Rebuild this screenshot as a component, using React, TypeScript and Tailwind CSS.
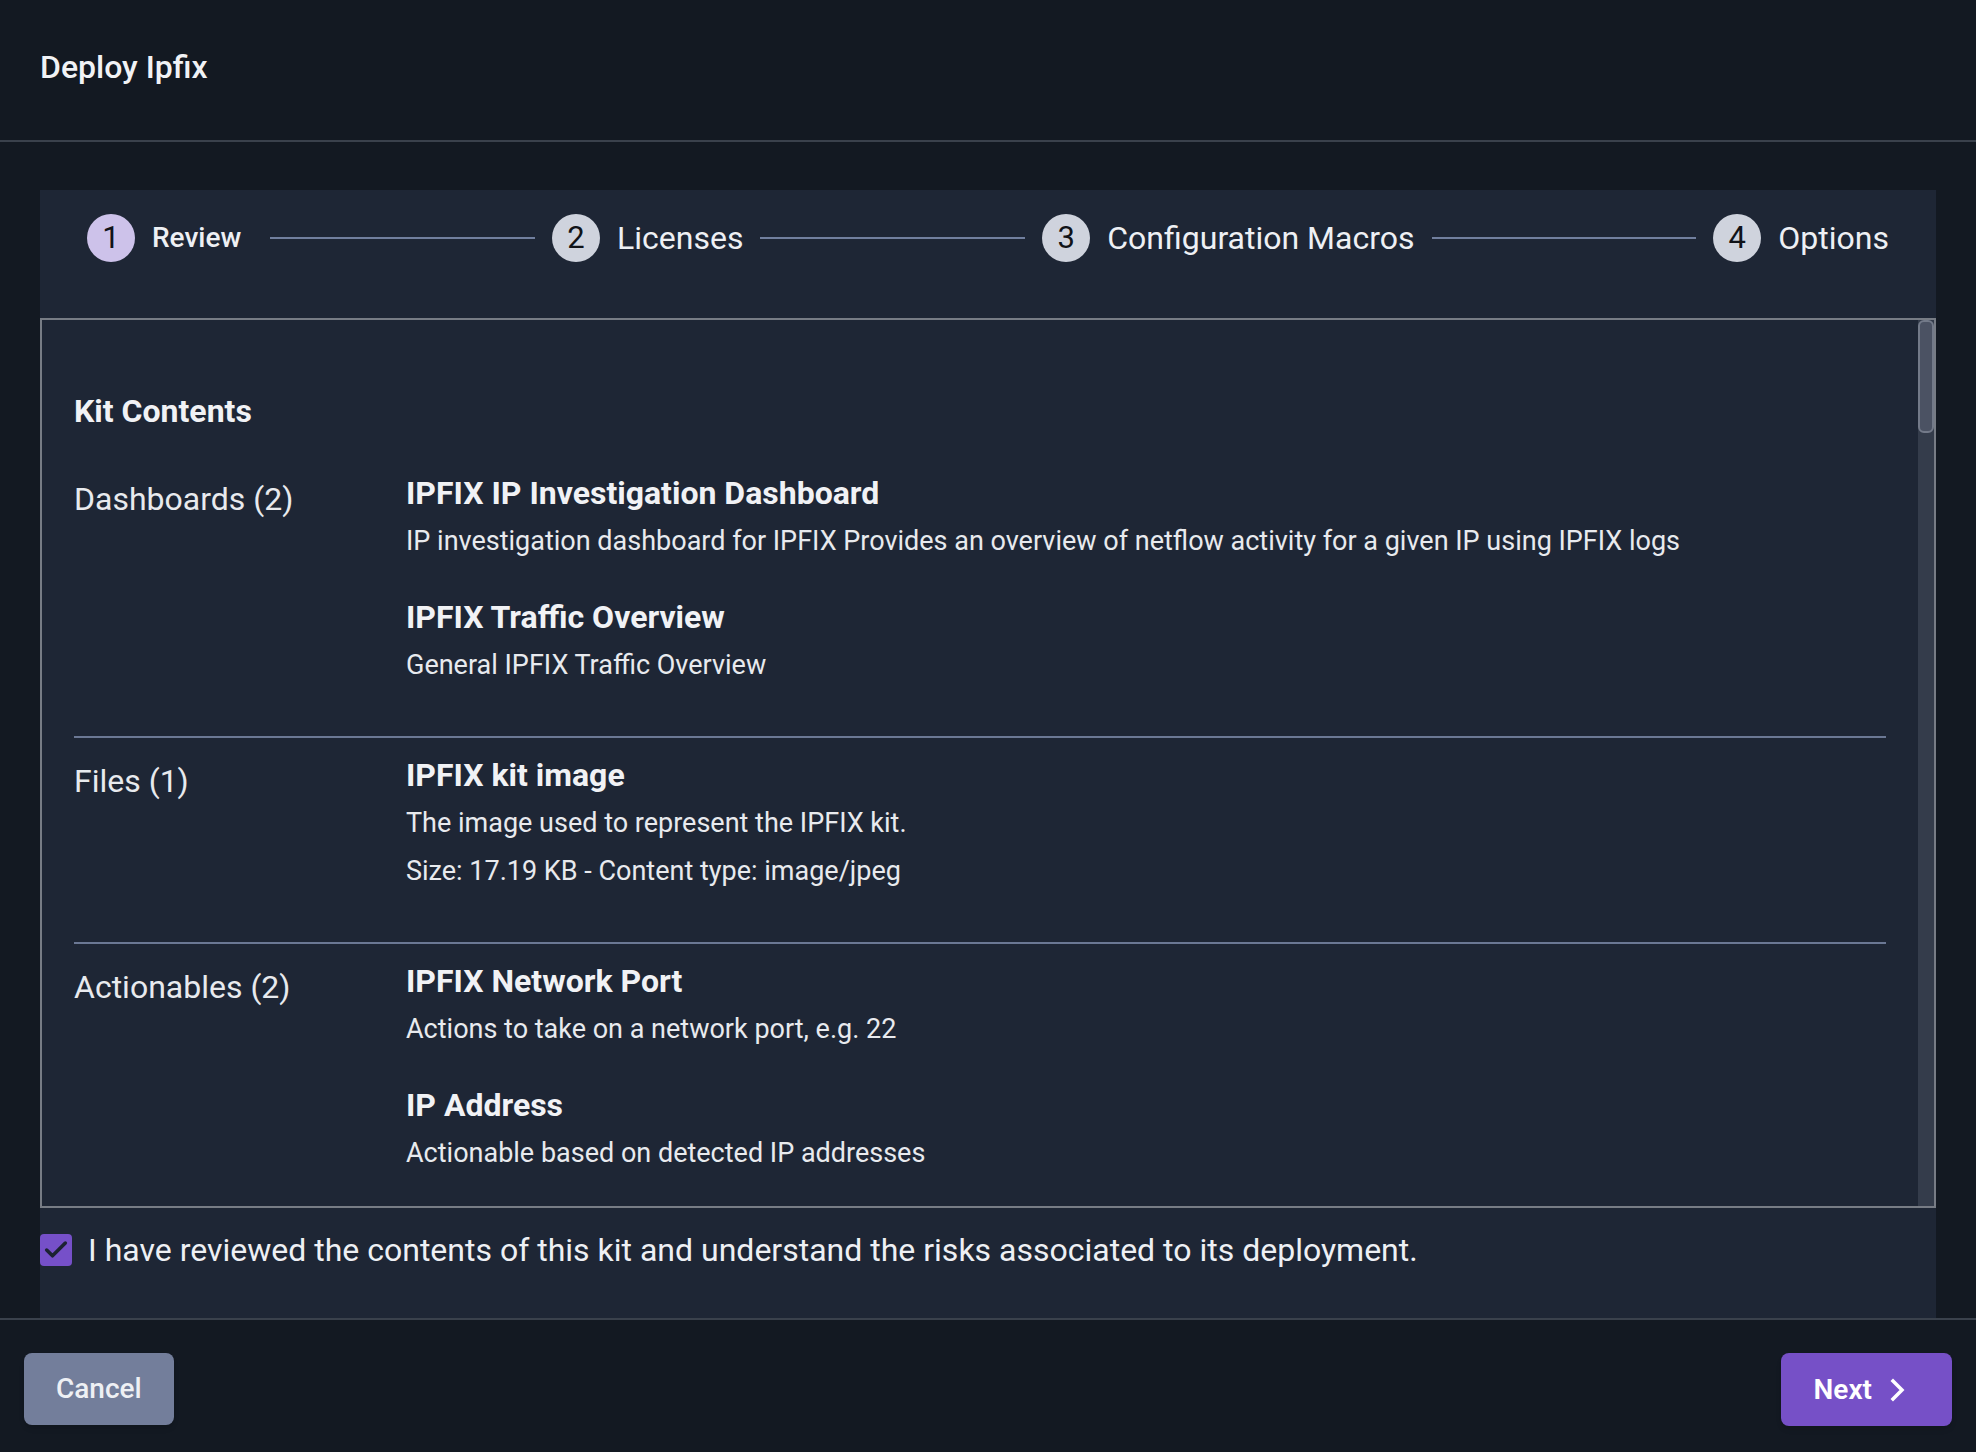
import { Check } from "lucide-react"

// Kit contents shown on the review step
const sections = [
  {
    label: "Dashboards (2)",
    items: [
      {
        title: "IPFIX IP Investigation Dashboard",
        lines: ["IP investigation dashboard for IPFIX Provides an overview of netflow activity for a given IP using IPFIX logs"],
      },
      { title: "IPFIX Traffic Overview", lines: ["General IPFIX Traffic Overview"] },
    ],
  },
  {
    label: "Files (1)",
    items: [
      {
        title: "IPFIX kit image",
        lines: ["The image used to represent the IPFIX kit.", "Size: 17.19 KB - Content type: image/jpeg"],
      },
    ],
  },
  {
    label: "Actionables (2)",
    items: [
      { title: "IPFIX Network Port", lines: ["Actions to take on a network port, e.g. 22"] },
      { title: "IP Address", lines: ["Actionable based on detected IP addresses"] },
    ],
  },
]

const steps = ["Review", "Licenses", "Configuration Macros", "Options"]

function Stepper() {
  return (
    <div className="flex items-center gap-[17px] px-[47px] pt-[24px] pb-[56px]">
      {steps.map((step, i) => (
        <div key={step} className="contents">
          {i > 0 && <div className="h-[2px] flex-1 bg-[#717f9e]" />}
          <div className="flex items-center gap-[17px]">
            <div
              className={
                i === 0
                  ? "flex h-[48px] w-[48px] items-center justify-center rounded-full bg-[#cdc2ea] text-[31px] text-[#111318]"
                  : "flex h-[48px] w-[48px] items-center justify-center rounded-full bg-[#cfd3dd] text-[31px] text-[#111318]"
              }
            >
              {i + 1}
            </div>
            {i === 0 ? (
              <span className="pr-[12px] text-[28px] font-medium text-[#eef0f4]">{step}</span>
            ) : (
              <span className="text-[32px] text-[#eef0f4]">{step}</span>
            )}
          </div>
        </div>
      ))}
    </div>
  )
}

export default function App() {
  return (
    <div className="flex h-[1452px] w-[1976px] flex-col overflow-hidden bg-[#131922] font-['Roboto',sans-serif] text-[#eef0f4]">
      {/* Header */}
      <div className="h-[142px] shrink-0 border-b-2 border-[#3a414c] px-[40px] pt-[47px]">
        <h1 className="text-[32px] font-medium leading-[40px] text-[#f1f2f5]">Deploy Ipfix</h1>
      </div>

      {/* Body */}
      <div className="flex-1 overflow-hidden px-[40px] pt-[48px]">
        <div className="h-full bg-[#1e2635]">
          <Stepper />

          <div className="flex h-[890px] border-2 border-[#777c85]">
            <div className="flex-1 overflow-hidden px-[32px] pt-[71px]">
              <h2 className="text-[32px] font-bold leading-[40px] text-[#f1f2f5]">Kit Contents</h2>
              {sections.map((section, si) => (
                <div
                  key={section.label}
                  className={
                    si === 0
                      ? "grid grid-cols-[332px_1fr] border-b-2 border-[#6b7894] pt-[42px] pb-[47px]"
                      : si === sections.length - 1
                        ? "grid grid-cols-[332px_1fr] pt-[17px]"
                        : "grid grid-cols-[332px_1fr] border-b-2 border-[#6b7894] pt-[17px] pb-[47px]"
                  }
                >
                  <div className="pt-[6px] text-[32px] leading-[40px] text-[#e8eaee]">{section.label}</div>
                  <div className="flex flex-col gap-[32px]">
                    {section.items.map((item) => (
                      <div key={item.title}>
                        <div className="text-[32px] font-bold leading-[40px] text-[#f1f2f5]">{item.title}</div>
                        <div className="mt-[4px]">
                          {item.lines.map((line) => (
                            <div key={line} className="text-[27px] leading-[48px] text-[#e8eaee]">
                              {line}
                            </div>
                          ))}
                        </div>
                      </div>
                    ))}
                  </div>
                </div>
              ))}
            </div>
            {/* Scrollbar */}
            <div className="w-[16px] shrink-0 bg-[#343c4b]">
              <div className="h-[113px] rounded-[6px] border-2 border-[#737a89] bg-[#4b5263]" />
            </div>
          </div>

          {/* Acknowledgement */}
          <label className="mt-[18px] flex items-center gap-[16px]">
            <span className="flex h-[32px] w-[32px] items-center justify-center rounded-[4px] bg-[#7650c9]">
              <Check size={28} strokeWidth={3} className="text-[#1c2232]" />
            </span>
            <span className="text-[32px] text-[#eef0f4]">
              I have reviewed the contents of this kit and understand the risks associated to its deployment.
            </span>
          </label>
        </div>
      </div>

      {/* Footer */}
      <div className="flex h-[134px] shrink-0 items-start justify-between border-t-2 border-[#3a414c] px-[24px] pt-[33px]">
        <button className="h-[72px] rounded-[8px] bg-[#737e9b] px-[32px] text-[28px] font-medium text-[#eef0f4] shadow-md">
          Cancel
        </button>
        <button className="flex h-[73px] items-center gap-[18px] rounded-[8px] bg-[#7650c7] pl-[33px] pr-[46px] text-[28px] font-semibold text-white shadow-md">
          Next
          <svg width="16" height="24" viewBox="0 0 16 24" fill="none" stroke="currentColor" strokeWidth="3.5" strokeLinecap="square">
            <path d="M3 3l9 9-9 9" />
          </svg>
        </button>
      </div>
    </div>
  )
}
